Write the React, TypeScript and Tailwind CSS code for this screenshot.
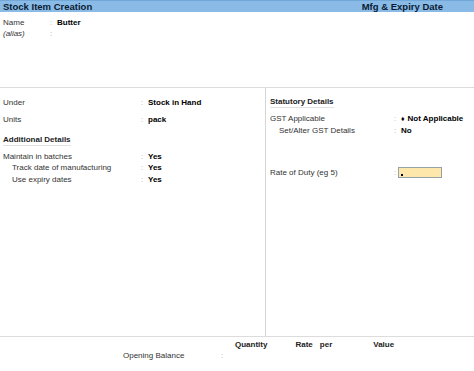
const font = { fontFamily: '"Liberation Sans", Arial, sans-serif' }

function Row({
  label,
  value,
  labelW,
  indent = false,
  italic = false,
  h = 'h-[11px]',
  children,
}: {
  label: string
  value?: string
  labelW: string
  indent?: boolean
  italic?: boolean
  h?: string
  children?: React.ReactNode
}) {
  return (
    <div className={`flex items-center ${h} leading-none`}>
      <span className={`${labelW} shrink-0 text-[#333] ${indent ? 'pl-[9px]' : ''} ${italic ? 'italic' : ''}`}>
        {label}
      </span>
      <span className="w-[7px] shrink-0 text-[#aaa]">:</span>
      {children ?? <span className="font-bold text-black">{value}</span>}
    </div>
  )
}

export default function App() {
  return (
    <div style={font} className="w-[474px] h-[371px] bg-white text-[8px] overflow-hidden">
      <div className="h-[12px] bg-[#89bbe6] border-t border-[#72a8d8] flex items-center justify-between pl-[3px] pr-[31px] text-[9.5px] font-bold text-[#0b1b33] leading-none">
        <span>Stock Item Creation</span>
        <span>Mfg &amp; Expiry Date</span>
      </div>

      <div className="h-[75px] pl-[3px] pt-[5px]">
        <Row label="Name" value="Butter" labelW="w-[47px]" />
        <Row label="(alias)" labelW="w-[47px]" italic>
          <span />
        </Row>
      </div>

      <div className="h-[249px] border-t border-[#dcdcdc] flex">
        <div className="w-[266px] border-r border-[#d6d6d6] pl-[3px] pt-[9px]">
          <Row label="Under" value="Stock in Hand" labelW="w-[138px]" />
          <div className="mt-[6px]">
            <Row label="Units" value="pack" labelW="w-[138px]" />
          </div>
          <div className="mt-[10px] h-[11px] flex items-center">
            <span className="font-bold text-[#222] border-b border-[#e2e2e2] leading-[10px]">Additional Details</span>
          </div>
          <div className="mt-[5px]">
            <Row label="Maintain in batches" value="Yes" labelW="w-[138px]" h="h-[11.5px]" />
            <Row label="Track date of manufacturing" value="Yes" labelW="w-[138px]" indent h="h-[11.5px]" />
            <Row label="Use expiry dates" value="Yes" labelW="w-[138px]" indent h="h-[11.5px]" />
          </div>
        </div>
        <div className="flex-1 pl-[4px] pt-[9px]">
          <div className="h-[11px] flex items-center">
            <span className="font-bold text-[#222] border-b border-[#e2e2e2] leading-[10px]">Statutory Details</span>
          </div>
          <div className="mt-[5px]">
            <Row label="GST Applicable" labelW="w-[124px]" h="h-[12px]">
              <span className="font-bold text-black">
                <span className="text-[7px] mr-[3px]">♦</span>Not Applicable
              </span>
            </Row>
            <Row label="Set/Alter GST Details" value="No" labelW="w-[124px]" indent h="h-[12px]" />
          </div>
          <div className="mt-[30px]">
            <Row label="Rate of Duty (eg 5)" labelW="w-[124px]" h="h-[11px]">
              <span className="relative -ml-[3px] w-[44px] h-[11px] bg-[#fde7ab] border border-[#93a3a8]">
                <span className="absolute left-[2px] bottom-[1px] w-[2px] h-[2px] bg-black" />
              </span>
            </Row>
          </div>
        </div>
      </div>

      <div className="border-t border-[#dcdcdc] pt-[2px]">
        <div className="flex h-[11px] items-center font-bold text-[#222] leading-none">
          <span className="ml-[235px]">Quantity</span>
          <span className="ml-[28px]">Rate</span>
          <span className="ml-[7px]">per</span>
          <span className="ml-[41px]">Value</span>
        </div>
        <div className="flex h-[11px] items-center leading-none">
          <span className="ml-[123px] w-[98px] text-[#333]">Opening Balance</span>
          <span className="text-[#aaa]">:</span>
        </div>
      </div>
    </div>
  )
}
